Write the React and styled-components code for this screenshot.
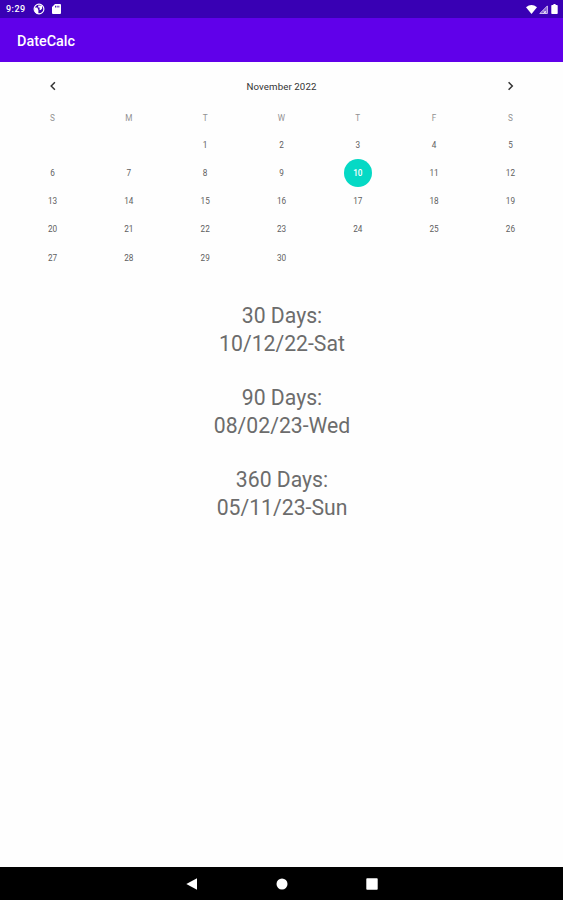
import React from 'react';
import styled, { createGlobalStyle } from 'styled-components';

const GlobalStyle = createGlobalStyle`
  * {
    box-sizing: border-box;
  }

  body {
    margin: 0;
    background: #fefefe;
    font-family: Roboto, 'Liberation Sans', sans-serif;
  }
`;

const Screen = styled.div`
  display: flex;
  flex-direction: column;
  height: 100vh;
`;

const StatusBar = styled.header`
  display: flex;
  align-items: center;
  height: 18px;
  padding: 0 4px 0 6px;
  background: #3900b4;
  color: #fff;

  svg {
    display: block;
    fill: #fff;
  }
`;

const Clock = styled.span`
  width: 27px;
  font-size: 9px;
  font-weight: 500;
  letter-spacing: 0.5px;
  line-height: 18px;
`;

const StatusIcons = styled.div`
  display: flex;
  align-items: center;
  gap: ${({ $gap }) => $gap}px;
  margin-left: ${({ $end }) => ($end ? 'auto' : '0')};
`;

const AppBar = styled.div`
  display: flex;
  align-items: center;
  height: 44px;
  padding: 3px 17px 0;
  background: #6000ea;

  h1 {
    margin: 0;
    color: #fff;
    font-size: 14.4px;
    font-weight: 500;
  }
`;

const Calendar = styled.section`
  padding: 10px 14.4px 0;
`;

const MonthBar = styled.div`
  display: grid;
  grid-template-columns: repeat(7, 1fr);
  align-items: center;
  height: 28.5px;
  color: #333;

  span {
    grid-column: 2 / 7;
    font-size: 9.7px;
    letter-spacing: 0.1px;
    text-align: center;
  }
`;

const MonthButton = styled.button`
  display: flex;
  justify-content: center;
  padding: 0;
  border: 0;
  background: none;

  svg {
    fill: none;
    stroke: #333;
    stroke-width: 1.5;
  }
`;

const Grid = styled.div`
  display: grid;
  grid-template-columns: repeat(7, 1fr);
  grid-template-rows: 30.6px;
  grid-auto-rows: 28.1px;
  place-items: center;
  color: #606060;
  font-size: 8.2px;
`;

const Weekday = styled.span`
  padding-top: 4px;
  color: #929292;
`;

const Day = styled.span`
  width: 28px;
  height: 28px;
  border-radius: 50%;
  background: ${({ $selected }) => ($selected ? '#05d9c5' : 'none')};
  color: ${({ $selected }) => ($selected ? '#fff' : 'inherit')};
  font-weight: ${({ $selected }) => ($selected ? 500 : 400)};
  line-height: 28px;
  text-align: center;
`;

const Results = styled.section`
  display: flex;
  flex: 1;
  flex-direction: column;
  gap: 25px;
  padding: 30.4px 0 0 1px;
  color: #6c6c6c;
  font-size: 21.2px;
  line-height: 28.5px;
  text-align: center;

  p {
    margin: 0;
  }
`;

const NavBar = styled.nav`
  display: flex;
  align-items: center;
  justify-content: center;
  gap: 78px;
  height: 33px;
  background: #000;

  svg {
    display: block;
    fill: #fff;
  }
`;

const weekdays = ['S', 'M', 'T', 'W', 'T', 'F', 'S'];
const days = Array.from({ length: 30 }, (_, i) => i + 1);
const selectedDay = 10;

const results = [
  { label: '30 Days:', date: '10/12/22-Sat' },
  { label: '90 Days:', date: '08/02/23-Wed' },
  { label: '360 Days:', date: '05/11/23-Sun' },
];

const App = () => (
  <Screen>
    <GlobalStyle />
    <StatusBar>
      <Clock>9:29</Clock>
      <StatusIcons $gap={7}>
        <svg width="12" height="12" viewBox="0 0 12 12">
          <circle cx="6" cy="6" r="4.9" fill="none" stroke="#fff" strokeWidth="1.1" />
          <path d="M1.4 4.6h2.9L5.4 7v4H4Q1.4 9.6 1.4 6ZM5.2 2.4h3.9v3.2L7.8 6.9H6.6V4.6H5.2Z" />
        </svg>
        <svg width="9" height="10" viewBox="0 0 9 10">
          <path fillRule="evenodd" d="M3 0h5q1 0 1 1v8q0 1-1 1H1Q0 10 0 9V3ZM3 1.8v1.6h.9V1.8Zm1.7 0v1.6h.9V1.8Zm1.7 0v1.6h.9V1.8Z" />
        </svg>
      </StatusIcons>
      <StatusIcons $gap={2} $end>
        <svg width="11" height="9" viewBox="0 0 11 9">
          <path d="M0 2.2Q5.5-2 11 2.2L5.5 9Z" />
        </svg>
        <svg width="9" height="9" viewBox="0 0 9 9">
          <path d="M.8 8.5 8.4.9v7.6Z" fill="#8760d2" stroke="#d9ccf2" strokeWidth=".9" />
          <path d="m4.5 6 2.6 2.4M7.1 6 4.5 8.4" stroke="#fff" strokeWidth=".8" />
        </svg>
        <svg width="9" height="10" viewBox="0 0 9 10">
          <path d="M2 1h1.4V0h2.2v1H7q.7 0 .7.7v7.6q0 .7-.7.7H2q-.7 0-.7-.7V1.7Q1.3 1 2 1Z" />
        </svg>
      </StatusIcons>
    </StatusBar>
    <AppBar>
      <h1>DateCalc</h1>
    </AppBar>
    <Calendar>
      <MonthBar>
        <MonthButton aria-label="Previous month">
          <svg width="8" height="10" viewBox="0 0 8 10">
            <path d="M5.9 1.3 2.2 5l3.7 3.7" />
          </svg>
        </MonthButton>
        <span>November 2022</span>
        <MonthButton aria-label="Next month">
          <svg width="8" height="10" viewBox="0 0 8 10">
            <path d="M2.6 1.3 6.3 5 2.6 8.7" />
          </svg>
        </MonthButton>
      </MonthBar>
      <Grid>
        {weekdays.map((name, i) => (
          <Weekday key={i}>{name}</Weekday>
        ))}
        {/* the month starts on a Tuesday */}
        <Day />
        <Day />
        {days.map((day) => (
          <Day key={day} $selected={day === selectedDay}>{day}</Day>
        ))}
      </Grid>
    </Calendar>
    <Results>
      {results.map(({ label, date }) => (
        <div key={label}>
          <p>{label}</p>
          <p>{date}</p>
        </div>
      ))}
    </Results>
    <NavBar>
      <svg width="12" height="12" viewBox="0 0 12 12">
        <path d="M.3 6 11 .2v11.6Z" />
      </svg>
      <svg width="12" height="12" viewBox="0 0 12 12">
        <circle cx="6" cy="6" r="5.5" />
      </svg>
      <svg width="12" height="12" viewBox="0 0 12 12">
        <rect x=".3" y=".3" width="11.4" height="11.4" rx=".8" />
      </svg>
    </NavBar>
  </Screen>
);

export default App;
